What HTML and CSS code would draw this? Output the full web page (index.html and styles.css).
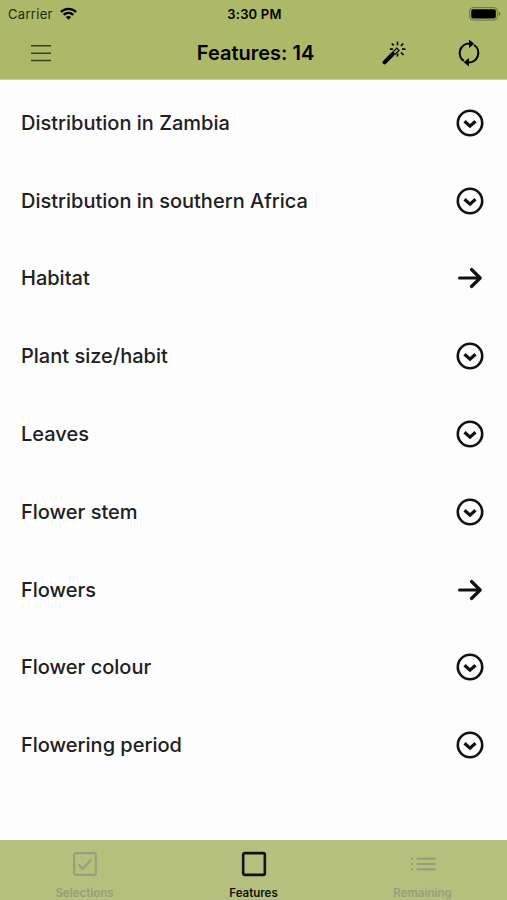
FILE: index.html
```html
<!DOCTYPE html>
<html lang="en">
<head>
<meta charset="utf-8">
<title>Features</title>
<link rel="stylesheet" href="styles.css">
</head>
<body>
<svg class="defs" width="0" height="0">
  <symbol id="expand" viewBox="0 0 28 28">
    <circle cx="14" cy="14" r="12.2" fill="none" stroke="currentColor" stroke-width="2.6"/>
    <path d="M8.5 12.2 14 17.2l5.500-5" fill="none" stroke="currentColor" stroke-width="3.2"/>
  </symbol>
  <symbol id="arrow" viewBox="0 0 28 28">
    <path d="M3.600 14H24M15.500 5.500 24.200 14l-8.700 8.500" fill="none" stroke="currentColor" stroke-width="3.200" stroke-linecap="round" stroke-linejoin="round"/>
  </symbol>
</svg>
<header class="header">
  <div class="status">
    <div class="carrier"><span>Carrier</span>
      <svg width="17" height="13" viewBox="0 0 17 13" fill="none" stroke="#000" stroke-width="2.300"><path d="M.9 5C5.100.7 11.900.7 16.100 5M3.700 7.900c2.700-2.600 6.900-2.600 9.600 0"/><path d="M5.800 10.100c1.600-1.400 3.800-1.400 5.400 0L8.500 12.700z" fill="#000" stroke="none"/></svg>
    </div>
    <div class="time">3:30 PM</div>
    <svg class="battery" width="32" height="14" viewBox="0 0 32 14"><rect x=".6" y=".6" width="27.800" height="12.500" rx="3.500" fill="none" stroke="#6b7340"/><rect x="2.200" y="2.200" width="24.600" height="9.300" rx="1.800"/><path d="M29.800 4.800c1.900.7 1.900 3.500 0 4.200z" fill="#59602f"/></svg>
  </div>
  <div class="navbar">
    <svg class="menu" width="20" height="18" viewBox="0 0 20 18" stroke="#3b401f" stroke-width="1.600"><path d="M0 1.700h20M0 9.200h20M0 16.500h20"/></svg>
    <h1 class="title">Features: 14</h1>
    <div class="actions">
      <svg width="24" height="24" viewBox="0 0 24 24" fill="none" stroke="#000"><path d="M2.500 21.300 10.800 13" stroke-width="4" stroke-linecap="round"/><path d="m10.500 11.500 4.300-4.300 2.200 2.200-4.300 4.300" stroke-width="1.200"/><path d="M15.500.8v3.400M15.500 12.500v3M7.900 8.200h3M20 8.200h3.500M9.800 2.500l2 2M21.300 2.500l-2.500 2.500M19 11.500l2.500 2.500" stroke-width="1.700"/></svg>
      <svg width="22" height="28" viewBox="0 0 22 28"><path d="M5.900 22A9.600 9.600 0 0 1 12 4.500M16.100 6A9.600 9.600 0 0 1 10 23.500" fill="none" stroke="#000" stroke-width="2.100"/><path d="M11 .6 16.300 4.800 11 9zM11 27.400 5.700 23.200 11 19z"/></svg>
    </div>
  </div>
</header>
<main class="list">
  <div class="row"><span class="w1">Distribution in Zambia</span><svg><use href="#expand"/></svg></div>
  <div class="row"><span>Distribution in southern Africa</span><svg><use href="#expand"/></svg></div>
  <div class="row"><span>Habitat</span><svg><use href="#arrow"/></svg></div>
  <div class="row"><span>Plant size/habit</span><svg><use href="#expand"/></svg></div>
  <div class="row"><span>Leaves</span><svg><use href="#expand"/></svg></div>
  <div class="row"><span>Flower stem</span><svg><use href="#expand"/></svg></div>
  <div class="row"><span>Flowers</span><svg><use href="#arrow"/></svg></div>
  <div class="row"><span>Flower colour</span><svg><use href="#expand"/></svg></div>
  <div class="row"><span>Flowering period</span><svg><use href="#expand"/></svg></div>
</main>
<nav class="tabs">
  <div class="tab"><svg viewBox="0 0 24 24" fill="none" stroke="currentColor"><rect x="2" y="2" width="20" height="20" rx="1.500" stroke-width="2"/><path d="m6 12.500 4 4 8-9" stroke-width="2"/></svg><span>Selections</span></div>
  <div class="tab active"><svg viewBox="0 0 24 24" fill="none" stroke="currentColor"><rect x="2" y="2" width="20" height="20" rx="1.500" stroke-width="2.400"/></svg><span>Features</span></div>
  <div class="tab"><svg viewBox="0 0 24 24" fill="none" stroke="currentColor" stroke-width="2"><path d="M6 7h17.500M6 12h17.500M6 17h17.500M1 7h2M1 12h2M1 17h2"/></svg><span>Remaining</span></div>
</nav>
</body>
</html>
```
FILE: styles.css
```css
* { box-sizing: border-box; }
body {
  margin: 0;
  height: 900px;
  display: flex;
  flex-direction: column;
  overflow: hidden;
  background: #fdfdfd;
  color: #202020;
  font-family: Inter, "Liberation Sans", sans-serif;
}
svg { display: block; flex: none; }
.defs { position: absolute; }
.header { height: 80px; background: #adb869; color: #000; border-bottom: 1px solid #c8cfa0; }
.status {
  height: 27px;
  padding: 0 6px 0 8px;
  display: grid;
  grid-template-columns: 1fr auto 1fr;
  align-items: center;
  font-size: 13px;
}
.carrier { display: flex; align-items: center; gap: 7px; color: #24280f; letter-spacing: .3px; }
.time { font-weight: 600; letter-spacing: .2px; }
.battery { justify-self: end; }
.navbar {
  height: 51px;
  padding: 0 27px 0 31px;
  display: grid;
  grid-template-columns: 1fr auto 1fr;
  align-items: center;
}
.title { margin: 0; font-size: 20px; font-weight: 600; line-height: 26px; }
.actions { display: flex; justify-content: flex-end; align-items: center; gap: 52px; }
.list { flex: 1; padding-top: 4px; }
.row {
  height: 77.8px;
  padding: 0 23px 0 21px;
  display: flex;
  align-items: center;
  justify-content: space-between;
  font-size: 20px;
  font-weight: 500;
}
.row svg { width: 28px; height: 28px; color: #111; }
.tabs { height: 60px; display: grid; grid-template-columns: repeat(3, 1fr); background: #b6c07d; }
.tab {
  display: flex;
  flex-direction: column;
  align-items: center;
  padding-top: 11px;
  gap: 9px;
  font-size: 11.500px;
  font-weight: 600;
  line-height: 15px;
  color: #979d7e;
}
.tab svg { width: 26px; height: 26px; }
.active { color: #111; }
```
